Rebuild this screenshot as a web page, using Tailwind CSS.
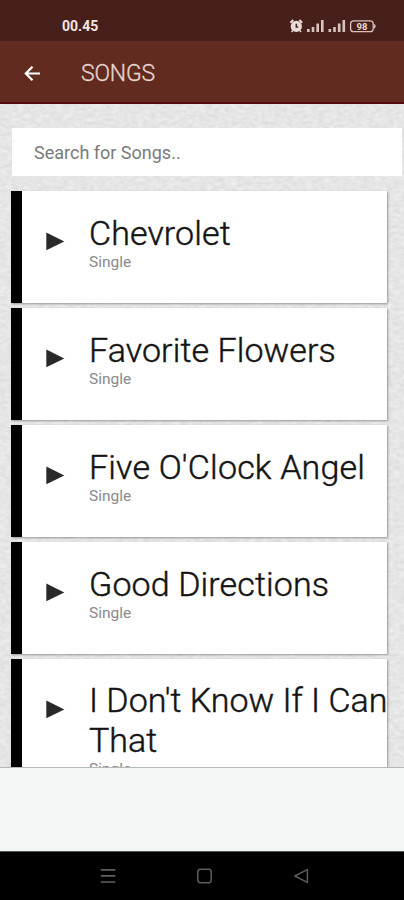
<!DOCTYPE html>
<html lang="en">
<head>
<meta charset="utf-8">
<title>Songs</title>
<script src="https://cdn.jsdelivr.net/npm/@tailwindcss/browser@4"></script>
</head>
<body class="w-[404px] h-[900px] overflow-hidden font-['Roboto',sans-serif] bg-black">
<div class="flex flex-col w-[404px] h-[900px] overflow-hidden">
  <header class="shrink-0">
    <div class="h-[41px] bg-[#48201b] flex items-center pt-3 pl-[62px] pr-[27px] text-[#f3e6e2]">
      <span class="text-[14px] font-bold leading-4 -mt-[2px]">00.45</span>
      <svg class="ml-auto -mt-px" width="88" height="16" viewBox="0 0 88 16" fill="#eadbd6">
        <circle cx="7.3" cy="8.4" r="5.6"/>
        <path d="M1.4 4.8 4.3 2M13.2 4.8 10.3 2" stroke="#eadbd6" stroke-width="2"/>
        <path d="M3.8 12.5 2.6 14M10.8 12.5 12 14" stroke="#eadbd6" stroke-width="1.5"/>
        <path d="M7.3 5.8V8.9H9.2" stroke="#48201b" stroke-width="1.5" fill="none"/>
        <path d="M18 11h2.6v3H18zM22.7 9h2.6v5h-2.6zM27.4 5.5H30V14h-2.6zM32 2h2.6v12H32zM39.5 11h2.6v3h-2.6zM44.2 9h2.6v5h-2.6zM48.9 5.5h2.6V14h-2.6zM53.5 2h2.6v12h-2.6z" opacity=".88"/>
        <rect x="61.6" y="2.9" width="22.6" height="10.8" rx="3" fill="none" stroke="#d6c2bb" stroke-width="1.3"/>
        <path d="M85.2 6c1.8 0 1.8 4.5 0 4.5z"/>
        <text x="73" y="11.6" text-anchor="middle" font-size="9.5" font-weight="700" font-family="Roboto">98</text>
      </svg>
    </div>
    <div class="h-[63px] bg-[#612c1f] border-b-2 border-[#570810] flex items-center pl-[24px] pt-1 text-[#e4d5d0]">
      <svg width="17" height="16" viewBox="0 0 17 16" fill="none" stroke="#fff" stroke-width="2.2"><path d="M16 7.5H2.2M8.5.7 1.8 7.5l6.7 6.8"/></svg>
      <h1 class="ml-[40px] text-[23px] leading-7 font-light tracking-[-0.2px] [-webkit-text-stroke:0.3px]">SONGS</h1>
    </div>
  </header>

  <main class="relative h-[664px] shrink-0 overflow-hidden bg-[#e5e5e5] border-b border-[#b5b8b8]">
    <svg class="absolute inset-0" width="404" height="664">
      <filter id="paper" x="0" y="0" width="100%" height="100%" color-interpolation-filters="sRGB">
        <feTurbulence type="fractalNoise" baseFrequency="0.16 0.28" numOctaves="3" seed="4"/>
        <feColorMatrix values="0.1 0 0 0 0.85  0.1 0 0 0 0.85  0.1 0 0 0 0.85  0 0 0 0 1"/>
      </filter>
      <rect width="404" height="664" filter="url(#paper)"/>
    </svg>
    <div class="relative pl-[11px] pt-6">
      <div class="ml-px w-[390px] h-[48px] bg-white flex items-center pl-[22px] text-[18px] text-[#7a7a7a]">Search for Songs..</div>
      <ul class="mt-[15px] w-[376px] flex flex-col gap-[5px]">
        <li class="h-[112px] bg-white border-l-[11px] border-black flex shadow-[1px_1px_2px_rgba(0,0,0,0.35)]">
          <svg class="ml-[24px] mt-[41px] shrink-0" width="19" height="19" viewBox="0 0 19 19"><path d="M.3.5 18.3 9.5.3 18.3z" fill="#292929"/></svg>
          <div class="ml-[24px] pt-[22px] whitespace-nowrap"><h2 class="text-[34px] leading-[40px] font-light text-[#141414] tracking-[0.1px] [-webkit-text-stroke:0.45px]">Chevrolet</h2><p class="text-[15.5px] leading-[18px] text-[#8a8a8a]">Single</p></div>
        </li>
        <li class="h-[112px] bg-white border-l-[11px] border-black flex shadow-[1px_1px_2px_rgba(0,0,0,0.35)]">
          <svg class="ml-[24px] mt-[41px] shrink-0" width="19" height="19" viewBox="0 0 19 19"><path d="M.3.5 18.3 9.5.3 18.3z" fill="#292929"/></svg>
          <div class="ml-[24px] pt-[22px] whitespace-nowrap"><h2 class="text-[34px] leading-[40px] font-light text-[#141414] tracking-[0.1px] [-webkit-text-stroke:0.45px]">Favorite Flowers</h2><p class="text-[15.5px] leading-[18px] text-[#8a8a8a]">Single</p></div>
        </li>
        <li class="h-[112px] bg-white border-l-[11px] border-black flex shadow-[1px_1px_2px_rgba(0,0,0,0.35)]">
          <svg class="ml-[24px] mt-[41px] shrink-0" width="19" height="19" viewBox="0 0 19 19"><path d="M.3.5 18.3 9.5.3 18.3z" fill="#292929"/></svg>
          <div class="ml-[24px] pt-[22px] whitespace-nowrap"><h2 class="text-[34px] leading-[40px] font-light text-[#141414] tracking-[0.18px] [-webkit-text-stroke:0.45px]">Five O'Clock Angel</h2><p class="text-[15.5px] leading-[18px] text-[#8a8a8a]">Single</p></div>
        </li>
        <li class="h-[112px] bg-white border-l-[11px] border-black flex shadow-[1px_1px_2px_rgba(0,0,0,0.35)]">
          <svg class="ml-[24px] mt-[41px] shrink-0" width="19" height="19" viewBox="0 0 19 19"><path d="M.3.5 18.3 9.5.3 18.3z" fill="#292929"/></svg>
          <div class="ml-[24px] pt-[22px] whitespace-nowrap"><h2 class="text-[34px] leading-[40px] font-light text-[#141414] tracking-[0.12px] [-webkit-text-stroke:0.45px]">Good Directions</h2><p class="text-[15.5px] leading-[18px] text-[#8a8a8a]">Single</p></div>
        </li>
        <li class="h-[151px] bg-white border-l-[11px] border-black flex shadow-[1px_1px_2px_rgba(0,0,0,0.35)]">
          <svg class="ml-[24px] mt-[41px] shrink-0" width="19" height="19" viewBox="0 0 19 19"><path d="M.3.5 18.3 9.5.3 18.3z" fill="#292929"/></svg>
          <div class="ml-[24px] pt-[22px] w-[298px] overflow-hidden whitespace-nowrap"><h2 class="text-[34px] leading-[39.5px] font-light text-[#141414] [-webkit-text-stroke:0.45px]">I Don't Know If I Can<br>That</h2><p class="text-[15.5px] leading-[18px] text-[#8a8a8a]">Single</p></div>
        </li>
      </ul>
    </div>
  </main>

  <div class="h-[83px] shrink-0 bg-[#f2f7f6]"></div>
  <nav class="h-[49px] shrink-0 bg-black border-t border-[#555] flex items-center pl-[100px] gap-[80px]">
    <svg width="16" height="16" viewBox="0 0 16 16" stroke="#606060" stroke-width="1.7"><path d="M.8 1.8h14.6M.8 7.8h14.6M.8 14h14.6"/></svg>
    <svg width="17" height="16" viewBox="0 0 17 16" fill="none" stroke="#5c5c5c" stroke-width="1.5"><rect x="1.8" y="1.3" width="13.4" height="13.4" rx="2.6"/></svg>
    <svg width="16" height="16" viewBox="0 0 16 16" fill="none" stroke="#5c5c5c" stroke-width="1.5" stroke-linejoin="round"><path d="M14.4 1.6v12.8L1.8 8z"/></svg>
  </nav>
</div>
</body>
</html>
